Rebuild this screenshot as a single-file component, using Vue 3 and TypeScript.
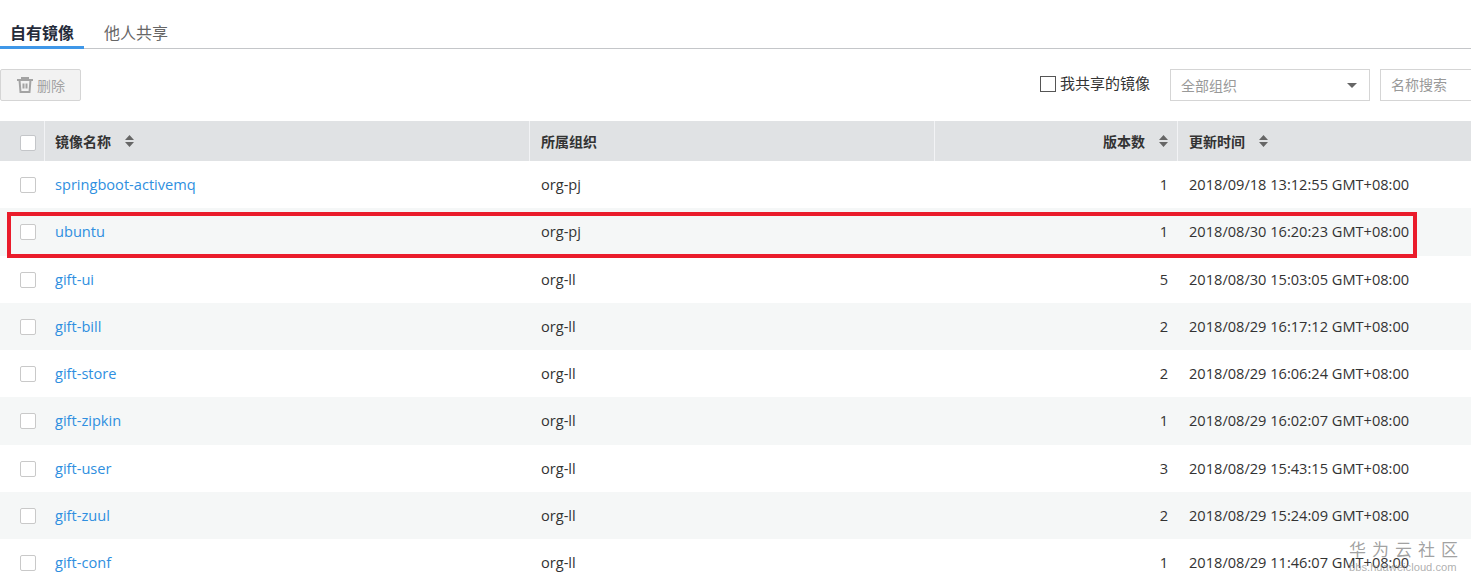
<script setup lang="ts">
interface Row { name: string; org: string; count: number; time: string }
const rows: Row[] = [
  { name: 'springboot-activemq', org: 'org-pj', count: 1, time: '2018/09/18 13:12:55 GMT+08:00' },
  { name: 'ubuntu', org: 'org-pj', count: 1, time: '2018/08/30 16:20:23 GMT+08:00' },
  { name: 'gift-ui', org: 'org-ll', count: 5, time: '2018/08/30 15:03:05 GMT+08:00' },
  { name: 'gift-bill', org: 'org-ll', count: 2, time: '2018/08/29 16:17:12 GMT+08:00' },
  { name: 'gift-store', org: 'org-ll', count: 2, time: '2018/08/29 16:06:24 GMT+08:00' },
  { name: 'gift-zipkin', org: 'org-ll', count: 1, time: '2018/08/29 16:02:07 GMT+08:00' },
  { name: 'gift-user', org: 'org-ll', count: 3, time: '2018/08/29 15:43:15 GMT+08:00' },
  { name: 'gift-zuul', org: 'org-ll', count: 2, time: '2018/08/29 15:24:09 GMT+08:00' },
  { name: 'gift-conf', org: 'org-ll', count: 1, time: '2018/08/29 11:46:07 GMT+08:00' },
]
</script>

<template>
  <div class="page">
    <div class="tabs">
      <div class="tab active">自有镜像</div>
      <div class="tab">他人共享</div>
    </div>

    <div class="toolbar">
      <button class="del" type="button">
        <svg width="16" height="16" viewBox="0 0 16 16" fill="none" stroke="#a3a3a3" stroke-width="2">
          <path d="M0 3h16M5 3V1h6v2M2.500 3l1 12h9l1-12M6.500 6.500v5M9.500 6.500v5" />
        </svg>
        <span>删除</span>
      </button>
      <div class="spacer"></div>
      <label class="mine"><span class="mine-box"></span><span class="mine-text">我共享的镜像</span></label>
      <div class="select"><span>全部组织</span><i class="caret"></i></div>
      <div class="search">名称搜索</div>
    </div>

    <div class="grid head">
      <div class="cell first"><span class="check head-check"></span></div>
      <div class="cell">镜像名称<svg class="sort" width="9" height="12" viewBox="0 0 9 12"><path d="M4.500 0L9 5H0zM4.500 12L0 7h9z" /></svg></div>
      <div class="cell">所属组织</div>
      <div class="cell right">版本数<svg class="sort" width="9" height="12" viewBox="0 0 9 12"><path d="M4.500 0L9 5H0zM4.500 12L0 7h9z" /></svg></div>
      <div class="cell">更新时间<svg class="sort" width="9" height="12" viewBox="0 0 9 12"><path d="M4.500 0L9 5H0zM4.500 12L0 7h9z" /></svg></div>
    </div>
    <div v-for="(r, i) in rows" :key="r.name" class="grid row" :class="{ odd: i % 2 === 1 }">
      <div class="cell first"><span class="check"></span></div>
      <div class="cell"><a class="link">{{ r.name }}</a></div>
      <div class="cell">{{ r.org }}</div>
      <div class="cell right">{{ r.count }}</div>
      <div class="cell">{{ r.time }}</div>
    </div>

    <div class="mark"></div>
    <div class="wm">
      <div class="wm-cn">华为云社区</div>
      <div class="wm-en">bbs.huaweicloud.com</div>
    </div>
  </div>
</template>

<style>
html, body { margin: 0; background: #fff; overflow: hidden; }
</style>

<style scoped>
.page {
  position: relative;
  width: 1471px;
  height: 580px;
  overflow: hidden;
  font-family: "Open Sans", "Noto Sans CJK SC", sans-serif;
  font-size: 14px;
  color: #333;
}
.tabs {
  display: flex;
  height: 48px;
  border-bottom: 1px solid #c4c6c9;
  box-sizing: content-box;
  align-items: flex-end;
}
.tab {
  width: 84px;
  margin-right: 10px;
  padding: 2px 0 0 10px;
  box-sizing: border-box;
  height: 32px;
  line-height: 30px;
  font-size: 16px;
  color: #666;
  border-bottom: 2px solid transparent;
}
.tab.active {
  color: #252b3a;
  font-weight: 700;
  border-bottom: 3px solid #3f97e8;
  margin-bottom: -1px;
  height: 34px;
  line-height: 32px;
}
.toolbar {
  display: flex;
  align-items: center;
  height: 32px;
  margin-top: 20px;
}
.del {
  display: flex;
  align-items: center;
  gap: 4px;
  width: 81px;
  height: 32px;
  padding: 0 0 0 16px;
  border: 1px solid #d5d5d5;
  border-radius: 2px;
  background: #f2f2f2;
  color: #a3a3a3;
  font: inherit;
  box-sizing: border-box;
}
.spacer { flex: 1; }
.mine {
  display: flex;
  align-items: center;
  gap: 4px;
  margin-right: 20px;
  margin-bottom: 3px;
  font-size: 15px;
  color: #333;
}
.mine-text { margin-bottom: 2px; }
.mine-box {
  width: 16px;
  height: 16px;
  box-sizing: border-box;
  border: 1px solid #555;
  display: block;
}
.select {
  display: flex;
  align-items: center;
  justify-content: space-between;
  width: 200px;
  height: 32px;
  padding: 0 12px 0 10px;
  border: 1px solid #d5d5d5;
  box-sizing: border-box;
  color: #999;
  margin-right: 10px;
}
.caret {
  width: 0;
  height: 0;
  border-left: 5px solid transparent;
  border-right: 5px solid transparent;
  border-top: 5px solid #666;
}
.search {
  width: 91px;
  height: 32px;
  line-height: 30px;
  padding-left: 10px;
  border: 1px solid #d5d5d5;
  border-right: none;
  box-sizing: border-box;
  color: #999;
}
.grid {
  display: grid;
  grid-template-columns: 44px 485px 405px 243px 294px;
}
.head {
  margin-top: 20px;
  height: 40px;
  background: #e0e2e4;
  font-weight: 700;
  font-size: 14px;
  color: #333;
}
.head .cell + .cell { box-shadow: inset 1px 0 0 #f2f3f5; }
.row { height: 47.25px; background: #fff; font-size: 14.6px; }
.row.odd { background: #f5f7f7; }
.row .cell { padding-bottom: 1px; }
.cell {
  display: flex;
  align-items: center;
  padding: 0 9px 0 12px;
  box-sizing: border-box;
  min-width: 0;
  white-space: nowrap;
}
.cell:nth-child(2) { padding-left: 11px; }
.cell.first, .row .cell.first { padding: 0 0 0 20px; }
.cell.right { justify-content: flex-end; }
.link { color: #2f8fe0; }
.check {
  display: block;
  width: 16px;
  height: 16px;
  margin-top: 1px;
  box-sizing: border-box;
  background: #fff;
  border: 1px solid #c9c9c9;
  border-radius: 2px;
}
.head-check { border-color: #c4c6c9; margin-top: 4px; }
.sort { margin-left: 14px; fill: #666; }
.mark {
  position: absolute;
  left: 7px;
  top: 212px;
  width: 1410px;
  height: 46px;
  box-sizing: border-box;
  border: 4px solid #ea1c2b;
}
.wm {
  position: absolute;
  left: 1349px;
  top: 540px;
  width: 110px;
  color: rgba(120, 120, 120, 0.7);
}
.wm-cn {
  font-size: 17px;
  line-height: 20px;
  letter-spacing: 6px;
  white-space: nowrap;
}
.wm-en {
  font-size: 11.200px;
  line-height: 14px;
  white-space: nowrap;
  color: rgba(140, 140, 140, 0.7);
  font-family: "Liberation Sans", sans-serif;
}
</style>
